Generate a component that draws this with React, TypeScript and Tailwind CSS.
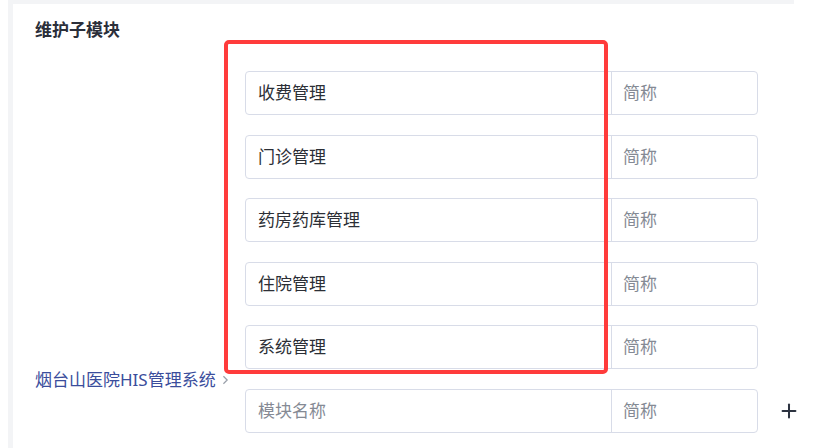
import { Plus } from 'lucide-react'

const modules = ['收费管理', '门诊管理', '药房药库管理', '住院管理', '系统管理']

function ModuleRow({ name, last }: { name?: string; last?: boolean }) {
  return (
    <div className="flex items-center">
      <div className="flex h-[44px] w-[513px] rounded-[4px] border border-[#d8dce8] bg-white">
        <input
          readOnly
          defaultValue={name}
          placeholder="模块名称"
          className="w-[365px] bg-transparent pl-[12px] text-[17px] text-[#2c2f36] outline-none placeholder:text-[#858a94]"
        />
        <input
          readOnly
          placeholder="简称"
          className="min-w-0 flex-1 border-l border-[#d8dce8] bg-transparent pl-[11px] text-[17px] outline-none placeholder:text-[#858a94]"
        />
      </div>
      {last && <Plus className="ml-[20px] h-[22px] w-[22px] text-[#2c3340]" strokeWidth={2.2} />}
    </div>
  )
}

export default function App() {
  return (
    <div className="h-[448px] w-[816px] overflow-hidden bg-white font-['Noto_Sans','Noto_Sans_CJK_SC',sans-serif]">
      <div className="ml-2 h-full w-[786px] bg-[#f3f4f6] pl-[5px] pt-1">
        <div className="relative h-full bg-white pl-[22px] pt-[14px]">
          <h2 className="text-[17px] font-bold leading-[24px] text-[#2b2f3a]">维护子模块</h2>

          <div className="mt-[29px] flex">
            <div className="w-[210px] shrink-0 pt-[297px]">
              <div className="flex items-center whitespace-nowrap leading-[24px]">
                <span className="text-[17px] text-[#3a4d9c]">烟台山医院HIS管理系统</span>
                <svg viewBox="0 0 8 12" className="ml-[6px] h-[10px] w-[7px] shrink-0" fill="none" stroke="#9aa0aa" strokeWidth="1.5">
                  <path d="M1.5 1.5 6 6l-4.5 4.5" />
                </svg>
              </div>
            </div>

            <div className="flex shrink-0 flex-col gap-[19.5px]">
              {modules.map((m) => (
                <ModuleRow key={m} name={m} />
              ))}
              <ModuleRow last />
            </div>
          </div>

          {/* highlight box */}
          <div className="pointer-events-none absolute left-[211px] top-[36px] h-[334px] w-[384px] rounded-[5px] border-[4px] border-[#ff3b3b]" />
        </div>
      </div>
    </div>
  )
}
